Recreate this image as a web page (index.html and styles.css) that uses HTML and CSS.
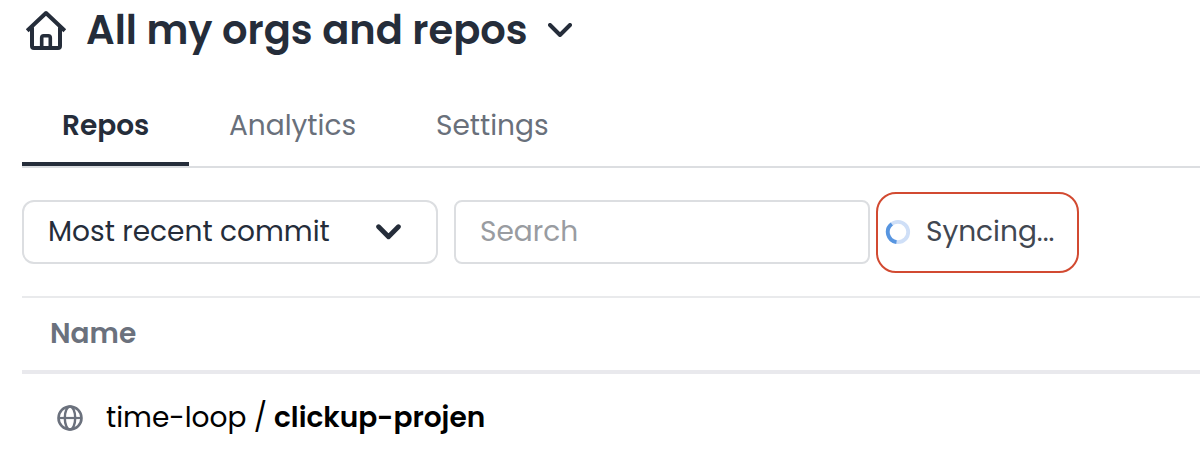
FILE: index.html
```html
<!DOCTYPE html>
<html lang="en">
<head>
<meta charset="utf-8">
<title>Repos</title>
<link rel="stylesheet" href="styles.css">
</head>
<body>
<header class="heading">
  <svg class="home" viewBox="0 0 42 42" fill="none" stroke="currentColor" stroke-width="4" stroke-linejoin="round"><path d="M2.200 21.700 21 4 39.800 21.700M7 18.500V37q0 2 2 2h24q2 0 2-2V18.500"/><path d="M16.700 38V28.700q0-2 2-2h4.600q2 0 2 2V38" stroke-width="3.600"/></svg>
  <h1 class="title">All my orgs and repos</h1>
  <svg class="title-chevron" viewBox="0 0 24 14" fill="none" stroke="currentColor" stroke-width="4" stroke-linecap="round" stroke-linejoin="round"><path d="M2 2 12 12 22 2"/></svg>
</header>
<nav class="tabs">
  <a class="tab active">Repos</a>
  <a class="tab">Analytics</a>
  <a class="tab">Settings</a>
</nav>
<div class="controls">
  <div class="select"><span>Most recent commit</span>
    <svg class="select-chevron" viewBox="0 0 24 15" fill="none" stroke="currentColor" stroke-width="4.600" stroke-linecap="round" stroke-linejoin="round"><path d="M2.500 2.500 12 12 21.500 2.500"/></svg>
  </div>
  <div class="search">Search</div>
  <div class="sync">
    <svg class="spinner" viewBox="0 0 26 26" fill="none" stroke-width="3.800"><circle cx="13" cy="13" r="10.200" stroke="#cfdff7"/><path d="M11.500 23.100A10.200 10.200 0 0 1 6.800 4.900" stroke="#5795e0"/></svg>
    <span>Syncing...</span>
  </div>
</div>
<div class="table">
  <div class="table-head">Name</div>
  <div class="row">
    <svg class="globe" viewBox="0 0 26 26" fill="none" stroke="currentColor" stroke-width="2.600"><circle cx="13" cy="13" r="11.500"/><ellipse cx="13" cy="13" rx="5.200" ry="11.500" stroke-width="2.400"/><path d="M1.500 13h23" stroke-width="2.200"/></svg>
    <span class="org">time-loop /</span><strong class="repo">clickup-projen</strong>
  </div>
</div>
</body>
</html>
```
FILE: styles.css
```css
* { box-sizing: border-box; }
body { margin: 0; padding-left: 22px; height: 459px; overflow: hidden; background: #fff; color: #252d3a; font: 400 28px/40px Poppins, Inter, sans-serif; white-space: nowrap; }
svg { flex: none; display: block; }
.heading { display: flex; height: 102px; padding: 0 0 0 3px; align-items: flex-start; }
.home { width: 42px; height: 42px; margin-top: 9px; }
.title { width: 441px; margin: 0 0 0 19px; font-size: 40px; line-height: 60px; font-weight: 600; }
.title-chevron { width: 24px; height: 14px; margin: 23px 0 0 21px; }
.tabs { display: flex; height: 66px; border-bottom: 2px solid #dcdee1; color: #69707b; }
.tab { height: 64px; padding: 4px 40px 0; }
.tab:nth-child(1) { width: 167px; }
.tab:nth-child(2) { width: 207px; }
.active { border-bottom: 4px solid #252d3a; color: #252d3a; font-weight: 600; }
.controls { display: flex; height: 128px; padding-top: 24px; }
.select, .search { width: 416px; height: 64px; margin-top: 8px; border: 2px solid #dcdee1; border-radius: 12px; padding: 10px 24px 0; }
.select { display: flex; justify-content: space-between; padding-right: 35px; }
.select-chevron { width: 25px; height: 16px; margin-top: 12px; }
.search { margin-left: 16px; border-radius: 8px; color: #999ca1; }
.sync { display: flex; width: 203px; height: 81px; margin-left: 6px; padding: 18px 0 0 7px; border: 2px solid #d24a31; border-radius: 20px; color: #414751; }
.spinner { width: 26px; height: 26px; margin: 7px 15px 0 0; }
.table { border-top: 2px solid #e9eaec; }
.table-head { height: 76px; padding: 16px 28px 0; border-bottom: 4px solid #e9e9ed; color: #6b717d; font-weight: 600; }
.row { display: flex; align-items: center; height: 88px; padding-left: 35px; color: #000; }
.globe { width: 26px; height: 26px; margin-right: 23px; color: #6b717d; }
.org { width: 168px; }
.repo { font-weight: 600; }
```
